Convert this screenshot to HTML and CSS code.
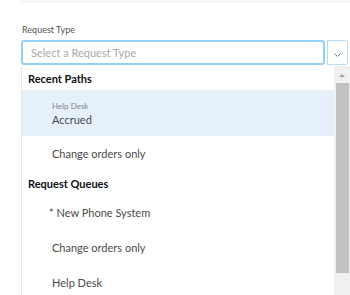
FILE: index.html
```html
<!DOCTYPE html>
<html>
<head>
    <meta charset="UTF-8">
    <title>Request Type</title>
    <link rel="stylesheet" href="styles.css">
</head>
<body>
    <div class="divider"></div>

    <div class="field">
        <label class="field-label">Request Type</label>
        <div class="select">
            <div class="select-input">Select a Request Type</div>
            <button class="select-toggle">
                <svg width="7" height="4" viewBox="0 0 7 4"><path d="M0.5 0.5l3 3 3-3" fill="none" stroke="#777" stroke-width="1"/></svg>
            </button>
        </div>

        <div class="menu">
            <ul class="options">
                <li class="group">Recent Paths</li>
                <li class="option active">
                    <span class="option-meta">Help Desk</span>
                    Accrued
                </li>
                <li class="option">Change orders only</li>
                <li class="group">Request Queues</li>
                <li class="option"><span class="star">*</span> New Phone System</li>
                <li class="option">Change orders only</li>
                <li class="option">Help Desk</li>
            </ul>
            <div class="scrollbar">
                <span class="scroll-up"></span>
                <span class="scroll-thumb"></span>
            </div>
        </div>
    </div>
</body>
</html>
```

FILE: styles.css
```css
body{
    margin: 0;
    font-family: Lato, "Open Sans", sans-serif;
    color: #222;
    background: #fff;
    overflow: hidden;
}

.divider{
    margin: 1px 0 0 21px;
    border-top: 1px solid #eee;
}

.field{
    padding: 22px 0 0 21px;
}

.field-label{
    display: block;
    font-size: 9px;
    line-height: 11px;
    color: #555;
    margin: 0 0 5px 1px;
}

.select{
    display: flex;
    height: 25px;
}

.select-input{
    flex: 1;
    border: 2px solid #93d2f6;
    border-radius: 3px;
    padding: 0 8px;
    font-size: 11px;
    line-height: 21px;
    color: #aaa;
}

.select-toggle{
    width: 21px;
    margin: 0 2px;
    border: 1px solid #b3ddf6;
    border-radius: 0 3px 3px 0;
    background: #fff;
    padding: 0;
}

.menu{
    display: flex;
    height: 240px;
    margin-top: 1px;
    border-left: 1px solid #e6e6e6;
}

.options{
    flex: 1;
    list-style: none;
    margin: 0;
    padding: 0;
}

.group{
    font-size: 11px;
    font-weight: bold;
    color: #111;
    padding: 2px 6px 0;
    height: 24px;
    line-height: 22px;
    box-sizing: border-box;
}

.option{
    font-size: 11px;
    color: #4a4a4a;
    padding: 0 30px;
    height: 35px;
    line-height: 35px;
}

.star{
    margin-left: -3px;
}

.option.active{
    background: #e5f0fb;
    height: 46px;
    line-height: 16px;
    padding-top: 11px;
    box-sizing: border-box;
}

.option-meta{
    display: block;
    font-size: 8px;
    line-height: 11px;
    color: #888;
}

.scrollbar{
    width: 16px;
    background: #f1f1f1;
    display: flex;
    flex-direction: column;
    align-items: center;
}

.scroll-up{
    margin: 8px 0 6px;
    border: 3px solid transparent;
    border-bottom: 3px solid #a3a3a3;
    border-top: 0;
}

.scroll-thumb{
    width: 13px;
    height: 190px;
    background: #c1c1c1;
}
```
